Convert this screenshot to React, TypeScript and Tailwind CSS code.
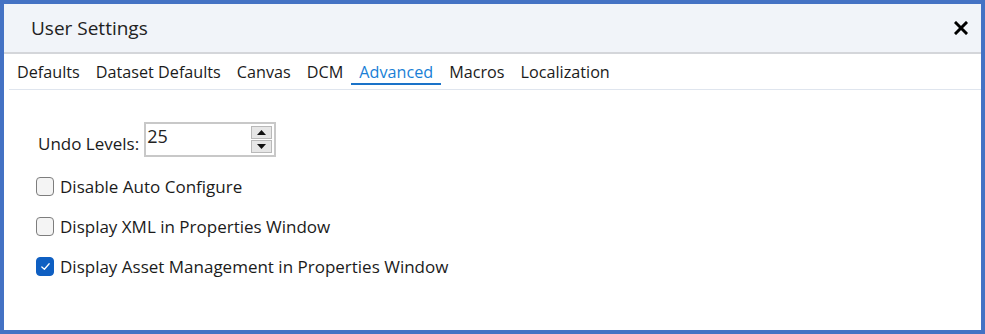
import { useState } from "react";

const tabs = ["Defaults", "Dataset Defaults", "Canvas", "DCM", "Advanced", "Macros", "Localization"];

function CheckRow({ label, checked, onToggle }: { label: string; checked: boolean; onToggle: () => void }) {
  return (
    <label className="flex items-center h-[19px] cursor-pointer select-none" onClick={onToggle}>
      <span
        className={
          checked
            ? "w-[18px] h-[19px] rounded-[4px] bg-[#0f5fc2] border border-[#0f5fc2] flex items-center justify-center"
            : "w-[18px] h-[19px] rounded-[4px] bg-[#f4f4f4] border-[1.5px] border-[#7d7d7d]"
        }
      >
        {checked && (
          <svg width="11" height="11" viewBox="0 0 12 12" fill="none">
            <path d="M2 6.5 L4.8 9 L10 3" stroke="#fff" strokeWidth="1.4" strokeLinecap="round" strokeLinejoin="round" />
          </svg>
        )}
      </span>
      <span className="ml-[6px] text-[17px] leading-[22px] text-[#1b1b1b]">{label}</span>
    </label>
  );
}

export default function App() {
  const [active, setActive] = useState("Advanced");
  const [undo, setUndo] = useState(25);
  const [opts, setOpts] = useState([false, false, true]);

  const toggle = (i: number) => setOpts(opts.map((v, j) => (j === i ? !v : v)));

  return (
    <div
      className="w-[985px] h-[334px] border-4 border-[#4472c4] bg-white flex flex-col overflow-hidden"
      style={{ fontFamily: '"Open Sans", "Noto Sans", Arial, sans-serif' }}
    >
      <div className="h-[50px] shrink-0 bg-[#f1f4f9] border-b-2 border-[#d4d6da] flex items-center justify-between pl-[27px] pr-[13px]">
        <span className="text-[19px] text-[#222] leading-none">User Settings</span>
        <svg width="14" height="14" viewBox="0 0 14 14" className="mb-[1px]">
          <path d="M2 2 L12 12 M12 2 L2 12" stroke="#000" strokeWidth="3" strokeLinecap="square" />
        </svg>
      </div>

      <div className="h-[36px] shrink-0 ml-[5px] border-b border-[#dfe5ee] flex items-start">
        {tabs.map((t) => (
          <button
            key={t}
            onClick={() => setActive(t)}
            className={
              t === active
                ? "h-[31px] px-2 pt-[7px] border-b-2 border-[#1a73c9] text-[16.2px] leading-[22px] text-[#1a7fd6]"
                : "h-[31px] px-2 pt-[7px] border-b-2 border-transparent text-[16.2px] leading-[22px] text-[#1b1b1b]"
            }
          >
            {t}
          </button>
        ))}
      </div>

      <div className="pl-[32px] pt-[32px] flex flex-col">
        <div className="flex items-center">
          <span className="ml-[2px] mt-[8px] text-[17px] leading-[22px] text-[#1b1b1b]">Undo Levels:</span>
          <div className="ml-[5px] w-[132px] h-[35px] border-2 border-[#c8c8c8] bg-white flex justify-between">
            <span className="pl-[1px] pt-[1px] text-[18px] leading-[22px] text-[#222]">{undo}</span>
            <div className="flex flex-col mt-[2px] mr-[2px] gap-[1px]">
              <button
                onClick={() => setUndo(undo + 1)}
                className="w-[21px] h-[13px] bg-[#e6e6e6] border border-[#b9b9b9] flex items-center justify-center"
              >
                <svg width="9" height="5" viewBox="0 0 9 5">
                  <path d="M0 5 L4.5 0 L9 5 Z" fill="#111" />
                </svg>
              </button>
              <button
                onClick={() => setUndo(Math.max(0, undo - 1))}
                className="w-[21px] h-[13px] bg-[#e6e6e6] border border-[#b9b9b9] flex items-center justify-center"
              >
                <svg width="9" height="5" viewBox="0 0 9 5">
                  <path d="M0 0 L9 0 L4.5 5 Z" fill="#111" />
                </svg>
              </button>
            </div>
          </div>
        </div>

        <div className="mt-[20px] flex flex-col gap-[21px]">
          <CheckRow label="Disable Auto Configure" checked={opts[0]} onToggle={() => toggle(0)} />
          <CheckRow label="Display XML in Properties Window" checked={opts[1]} onToggle={() => toggle(1)} />
          <CheckRow label="Display Asset Management in Properties Window" checked={opts[2]} onToggle={() => toggle(2)} />
        </div>
      </div>
    </div>
  );
}
